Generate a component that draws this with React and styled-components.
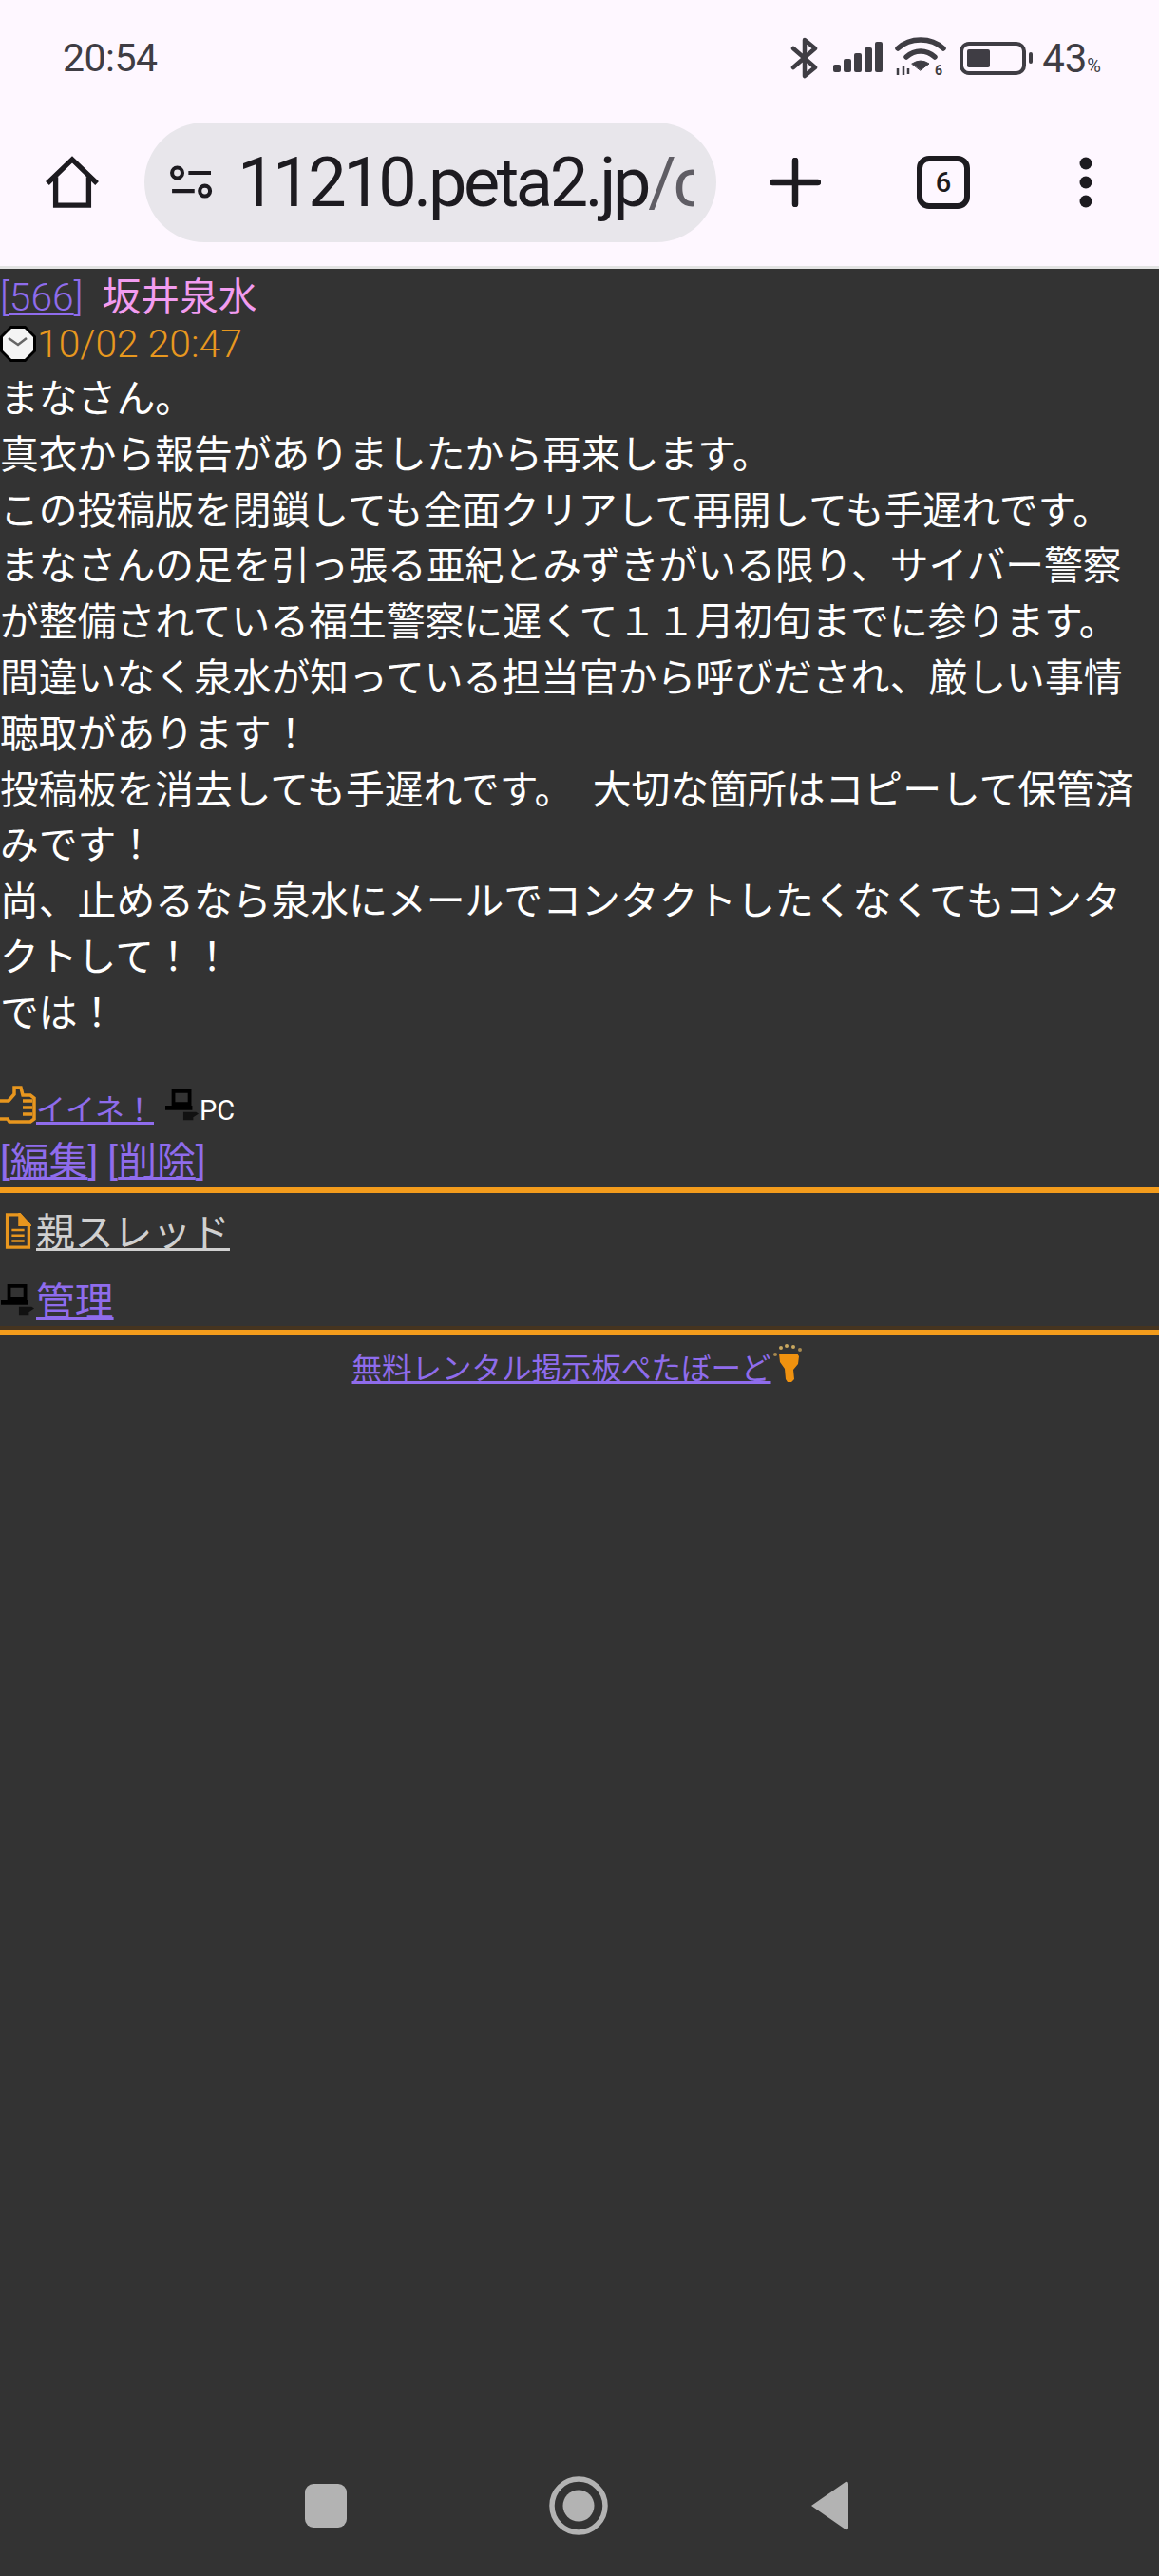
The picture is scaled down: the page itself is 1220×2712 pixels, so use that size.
import React from 'react';
import styled, { createGlobalStyle } from 'styled-components';

const Global = createGlobalStyle`
  html, body {
    margin: 0;
    padding: 0;
    background: #333333;
  }
  body {
    font-family: Roboto, "Noto Sans CJK JP", sans-serif;
  }
`;

const messageLines = [
  'まなさん。',
  '真衣から報告がありましたから再来します。',
  'この投稿版を閉鎖しても全面クリアして再開しても手遅れです。',
  'まなさんの足を引っ張る亜紀とみずきがいる限り、サイバー警察が整備されている福生警察に遅くて１１月初旬までに参ります。',
  '間違いなく泉水が知っている担当官から呼びだされ、厳しい事情聴取があります！',
  '投稿板を消去しても手遅れです。　大切な箇所はコピーして保管済みです！',
  '尚、止めるなら泉水にメールでコンタクトしたくなくてもコンタクトして！！',
  'では！',
];

const PcIcon = () => (
  <svg width="36" height="36" viewBox="0 0 38 38">
    <path d="M7 1h22v18H7z M11 5v10h14V5z" fill="#000" fillRule="evenodd" />
    <path d="M0 19h30v5H0z" fill="#000" />
    <path d="M20 26h14l3 2-6 4v3H20z" fill="#111" />
  </svg>
);

const App = () => (
  <Page>
    <Global />
    <Chrome>
      <StatusBar>
        <Clock>20:54</Clock>
        <StatusIcons>
          <StatusIcon width="30" height="44" viewBox="0 0 30 44" fill="none" stroke="#3f3d44" strokeWidth="4.5" strokeLinejoin="round" strokeLinecap="round">
            <path d="M3 12l23 20-11 9V3l11 9L3 32" />
          </StatusIcon>
          <StatusIcon $gap={15} width="52" height="34" viewBox="0 0 52 34" fill="#3f3d44">
            <rect x="0" y="24" width="8" height="8" rx="2" />
            <rect x="11" y="18" width="8" height="14" rx="2" />
            <rect x="22" y="12" width="8" height="20" rx="2" />
            <rect x="33" y="6" width="8" height="26" rx="2" />
            <rect x="44" y="0" width="8" height="32" rx="2" />
          </StatusIcon>
          <StatusIcon $gap={13} width="54" height="46" viewBox="0 0 54 46" fill="none" stroke="#3f3d44" strokeWidth="5.5" strokeLinecap="round">
            <path d="M3 13C16 1 38 1 51 13" />
            <path d="M12 22C21 14 33 14 42 22" />
            <path d="M18 29Q27 23 36 29L27 36z" fill="#3f3d44" strokeWidth="1" />
            <path d="M3 34v7M9 32v9M14 34v6" strokeWidth="2.5" strokeLinecap="butt" />
            <text x="42" y="41" fontSize="14" fontWeight="700" fill="#3f3d44" stroke="none" fontFamily="Roboto">6</text>
          </StatusIcon>
          <Battery>
            <BatteryFill />
          </Battery>
          <BatteryTip />
          <Percent>
            43<small>%</small>
          </Percent>
        </StatusIcons>
      </StatusBar>
      <Toolbar>
        <ToolIcon $width={152}>
          <svg width="58" height="58" viewBox="0 0 60 60" fill="none" stroke="#1d1b20" strokeWidth="5.5">
            <path d="M3 31L30 5l27 26" />
            <path d="M12 24v31h36V24" />
          </svg>
        </ToolIcon>
        <UrlPill>
          <svg width="48" height="40" viewBox="0 0 52 44" fill="none" stroke="#1d1b20" strokeWidth="4.5">
            <circle cx="9" cy="11" r="6" />
            <path d="M22 11h26M3 32h26" />
            <circle cx="41" cy="32" r="6" />
          </svg>
          <UrlText>
            11210.peta2.jp<UrlRest>/c</UrlRest>
          </UrlText>
        </UrlPill>
        <ToolIcon $width={166}>
          <svg width="54" height="52" viewBox="0 0 54 52" stroke="#1d1b20" strokeWidth="6.5" strokeLinecap="round">
            <path d="M27 3v46M3 26h48" />
          </svg>
        </ToolIcon>
        <TabCount>6</TabCount>
        <ToolIcon $width={100} $offset={72}>
          <svg width="16" height="54" viewBox="0 0 16 54" fill="#1d1b20">
            <circle cx="8" cy="7" r="6.5" />
            <circle cx="8" cy="27" r="6.5" />
            <circle cx="8" cy="47" r="6.5" />
          </svg>
        </ToolIcon>
      </Toolbar>
    </Chrome>

    <Content>
      <PostHeader>
        <PostNumber>
          [<a href="#566">566</a>]
        </PostNumber>
        <Author>坂井泉水</Author>
      </PostHeader>
      <DateRow>
        <svg width="38" height="38" viewBox="0 0 38 38">
          <path d="M11 0h16l11 11v16L27 38H11L0 27V11z" fill="#000" />
          <path d="M12 3h14l9 9v14l-9 9H12l-9-9V12z" fill="#f4f4f4" />
          <path d="M9 13l10 7 9-7" fill="none" stroke="#666" strokeWidth="2.5" />
        </svg>
        <span>10/02 20:47</span>
      </DateRow>
      <Message>
        {messageLines.map((line) => (
          <div key={line}>{line}</div>
        ))}
      </Message>
      <MetaRow>
        <svg width="38" height="40" viewBox="0 0 38 40" fill="none" stroke="#e8961e" strokeWidth="3.5">
          <path d="M0 16h9l6-7V2h7l2 8h8l4 3v22l-4 3H10l-2-3H0" />
          <path d="M24 16h10M24 23h10M24 30h10" />
        </svg>
        <SmallLink href="#like">イイネ！</SmallLink>
        <PcSlot>
          <PcIcon />
        </PcSlot>
        <PcLabel>PC</PcLabel>
      </MetaRow>
      <ActionRow>
        [<a href="#edit">編集</a>] [<a href="#delete">削除</a>]
      </ActionRow>
      <Rule />
      <NavList>
        <NavRow>
          <IconSlot>
            <svg width="28" height="38" viewBox="0 0 28 40" fill="none" stroke="#e8961e" strokeWidth="3.5">
              <path d="M2 2h14l10 11v25H2z" />
              <path d="M16 2v11h10z" fill="#e8961e" />
              <path d="M7 19h14M7 25h14M7 31h14" strokeWidth="2.5" />
            </svg>
          </IconSlot>
          <ParentLink href="#parent">親スレッド</ParentLink>
        </NavRow>
        <NavRow>
          <IconSlot>
            <PcIcon />
          </IconSlot>
          <a href="#admin">管理</a>
        </NavRow>
      </NavList>
      <Rule $shaded />
      <Footer>
        <FooterLink href="#peta2">無料レンタル掲示板ぺたぼーど</FooterLink>
        <FootIcon width="30" height="40" viewBox="0 0 30 40">
          <path d="M6 10h19l2 3-1 8-5 6 1 10-3 3h-4l-2-3-1-11-5-7z" fill="#f0920f" />
          <circle cx="2" cy="11" r="2" fill="#a88a50" />
          <circle cx="8" cy="4" r="2" fill="#c9a860" />
          <circle cx="14" cy="2" r="2" fill="#c9a860" />
          <circle cx="21" cy="3" r="2" fill="#c9a860" />
          <circle cx="28" cy="6" r="2" fill="#a88a50" />
        </FootIcon>
      </Footer>
    </Content>

    <NavBar>
      <svg width="44" height="46" viewBox="0 0 44 46">
        <rect x="0" y="0" width="44" height="46" rx="9" fill="#b3b3b3" />
      </svg>
      <svg width="62" height="62" viewBox="0 0 62 62">
        <circle cx="31" cy="31" r="28" fill="none" stroke="#b3b3b3" strokeWidth="5.5" />
        <circle cx="31" cy="31" r="16.5" fill="#b3b3b3" />
      </svg>
      <svg width="42" height="52" viewBox="0 0 42 52">
        <path d="M2 26L38 1q3-1 3 2v46q0 3-3 2z" fill="#b3b3b3" />
      </svg>
    </NavBar>
  </Page>
);

export default App;

const Page = styled.div`
  width: 1220px;
  height: 2712px;
  display: flex;
  flex-direction: column;
  background: #333333;
  overflow: hidden;
`;

const Chrome = styled.header`
  height: 280px;
  flex-shrink: 0;
  background: #fef7ff;
  border-bottom: 3px solid #e3e3e3;
  color: #1d1b20;
`;

const StatusBar = styled.div`
  height: 122px;
  padding: 0 61px 0 66px;
  display: flex;
  align-items: center;
  justify-content: space-between;
`;

const Clock = styled.span`
  font-size: 41px;
  color: #3f3d44;
  letter-spacing: -0.5px;
`;

const StatusIcons = styled.div`
  display: flex;
  align-items: center;
  color: #3f3d44;
`;

const StatusIcon = styled.svg`
  margin-left: ${(p) => p.$gap || 0}px;
`;

const Battery = styled.div`
  width: 70px;
  height: 35px;
  box-sizing: border-box;
  border: 4px solid #3f3d44;
  border-radius: 10px;
  padding: 4px;
  margin-left: 14px;
`;

const BatteryFill = styled.div`
  width: 24px;
  height: 100%;
  background: #3f3d44;
  border-radius: 2px;
`;

const BatteryTip = styled.div`
  width: 4px;
  height: 12px;
  background: #3f3d44;
  border-radius: 2px;
  margin-left: 3px;
`;

const Percent = styled.span`
  font-size: 42px;
  margin-left: 10px;

  small {
    font-size: 20px;
  }
`;

const Toolbar = styled.div`
  height: 126px;
  margin-top: 7px;
  display: flex;
  align-items: center;
`;

const ToolIcon = styled.div`
  width: ${(p) => p.$width}px;
  margin-left: ${(p) => p.$offset || 0}px;
  display: flex;
  align-items: center;
  justify-content: center;
`;

const UrlPill = styled.div`
  width: 602px;
  height: 126px;
  box-sizing: border-box;
  background: #e8e6eb;
  border-radius: 63px;
  padding: 0 24px 0 26px;
  display: flex;
  align-items: center;
  gap: 24px;
  overflow: hidden;
`;

const UrlText = styled.div`
  font-size: 72px;
  color: #1d1b20;
  white-space: nowrap;
  overflow: hidden;
  flex: 1;
  letter-spacing: -3.4px;
`;

const UrlRest = styled.span`
  color: #5f5d64;
`;

const TabCount = styled.div`
  width: 56px;
  height: 56px;
  margin-left: 45px;
  box-sizing: border-box;
  border: 6px solid #1d1b20;
  border-radius: 13px;
  display: flex;
  align-items: center;
  justify-content: center;
  font-size: 29px;
  font-weight: 500;
`;

const Content = styled.main`
  flex: 1;
  color: #ffffff;
  font-size: 40.8px;
  line-height: 58.8px;
  word-break: break-all;

  a {
    color: #8f6cec;
    text-decoration-thickness: 3px;
  }
`;

const PostHeader = styled.div`
  display: flex;
  align-items: center;
  gap: 20px;
  height: 60px;
`;

const PostNumber = styled.span`
  color: #8f6cec;
  font-weight: 300;
`;

const Author = styled.span`
  color: #f29cf0;
`;

const DateRow = styled.div`
  display: flex;
  align-items: center;
  gap: 1px;
  height: 38px;
  color: #e8981f;
  font-weight: 300;

  svg {
    flex-shrink: 0;
  }
`;

const Message = styled.div`
  padding-top: 10px;
`;

const MetaRow = styled.div`
  margin-top: 46px;
  height: 54px;
  display: flex;
  align-items: center;

  > svg {
    align-self: flex-start;
  }
`;

const SmallLink = styled.a`
  font-size: 31px;
`;

const PcSlot = styled.span`
  display: flex;
  align-self: flex-start;
  margin: 3px 0 0 12px;
`;

const PcLabel = styled.span`
  font-size: 29px;
`;

const ActionRow = styled.div`
  height: 53px;
  line-height: 53px;
  color: #8f6cec;
`;

const Rule = styled.div`
  height: 6px;
  background: #f39c1c;
  box-shadow: ${(p) => (p.$shaded ? '0 -4px 0 #46341f' : 'none')};
`;

const NavList = styled.div`
  height: 144px;
  box-sizing: border-box;
  padding-top: 20px;
  display: flex;
  flex-direction: column;
  gap: 27px;
`;

const NavRow = styled.div`
  height: 46px;
  display: flex;
  align-items: center;
`;

const IconSlot = styled.span`
  width: 38px;
  display: flex;
  justify-content: center;
  margin-top: -6px;
`;

const ParentLink = styled.a`
  && {
    color: #d0d0d0;
  }
`;

const Footer = styled.div`
  display: flex;
  justify-content: center;
  align-items: center;
  height: 74px;
  padding-right: 6px;
  font-size: 31.5px;
`;

const FooterLink = styled.a``;

const FootIcon = styled.svg`
  margin: -16px 0 0 2px;
`;

const NavBar = styled.nav`
  height: 110px;
  margin-bottom: 19px;
  padding: 0 326px 0 321px;
  display: flex;
  align-items: center;
  justify-content: space-between;
`;
